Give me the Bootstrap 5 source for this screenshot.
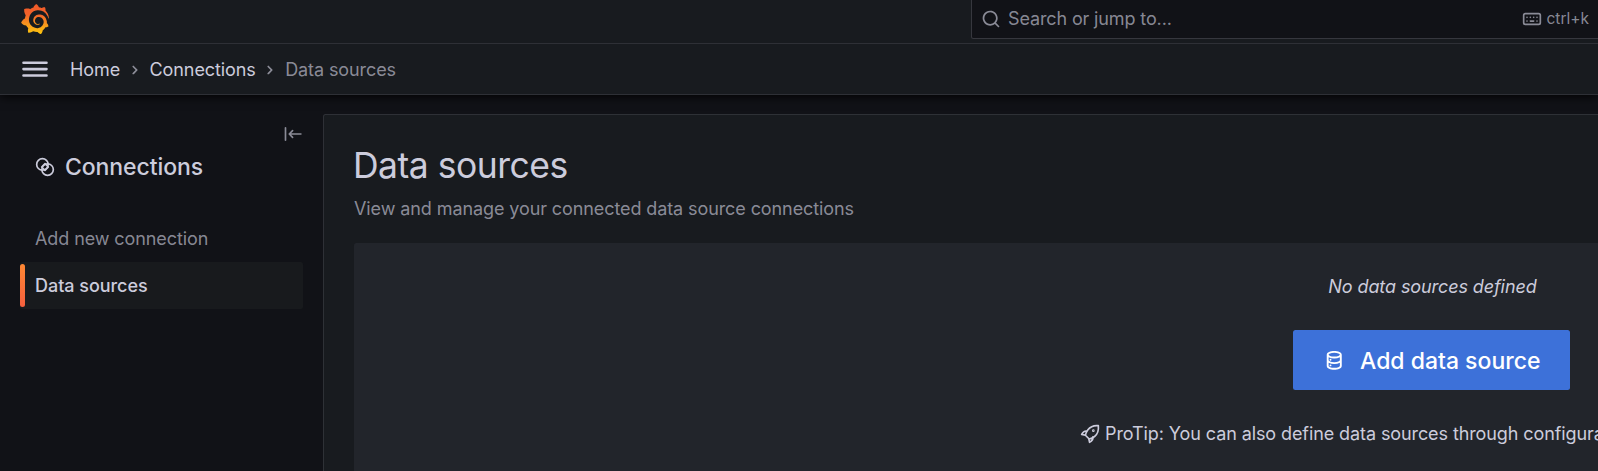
<!DOCTYPE html>
<html lang="en" data-bs-theme="dark">
<head>
<meta charset="utf-8">
<title>Data sources - Connections - Grafana</title>
<link href="https://cdn.jsdelivr.net/npm/bootstrap@5.3.0/dist/css/bootstrap.min.css" rel="stylesheet">
<style>
:root { --tx: #ccccdc; --tx2: rgba(204,204,220,.65); --line: rgba(204,204,220,.12); --canvas: #111217; --primary: #181b1f; --secondary: #22252b; }
html, body { height: 100%; }
body { background: var(--canvas); color: var(--tx); font-family: Inter, sans-serif; font-size: 18px; line-height: 27.5px; letter-spacing: -.095px; overflow: hidden; }
svg { flex: none; fill: currentColor; }
.ln { fill: none; stroke: currentColor; stroke-width: 2; stroke-linecap: round; stroke-linejoin: round; }
.chrome { background: var(--primary); border-bottom: 1px solid var(--line); box-shadow: 0 1px 10px #000; position: relative; }
.top-row { height: 44px; border-bottom: 1px solid var(--line); padding-left: 20px; }
.logo { margin-top: 4px; }
.crumb-row { height: 50px; padding-left: 20px; }
.crumbs { padding-top: 2px; }
.crumbs svg { margin: 0 5px 0 4.5px; }
.search-box { width: 627px; height: 39px; background: var(--canvas); border: solid rgba(204,204,220,.2); border-width: 0 0 1px 1px; border-radius: 0 0 0 2.5px; color: var(--tx2); padding: 0 9px; }
.search-text { margin-left: 7px; letter-spacing: -.13px; }
.kbd-hint { font-size: 15.5px; letter-spacing: 0; }
.crumbs a { color: var(--tx); }
.sub { color: var(--tx2); }
.side { width: 323px; padding: 19px 20px 0; }
.side-head { padding-left: 15px; gap: 10px; margin-top: -1px; }
.side-nav { margin-top: 33px; }
.side-title { font-size: 23px; line-height: 27.5px; font-weight: 500; margin: 0; padding-top: 1px; letter-spacing: -.08px; color: var(--tx); }
.side-link { height: 47px; padding: 1px 0 0 15px; border-radius: 2.5px; color: var(--tx2); }
.side-link.active { background: #181a1d; color: var(--tx); font-weight: 500; letter-spacing: -.04px; position: relative; }
.side-link.active::before { content: ""; position: absolute; left: 0; top: 2px; bottom: 2px; width: 5px; border-radius: 2.5px; background: linear-gradient(#ff8833, #f55f3e); }
.pane { margin-top: 19px; background: var(--primary); border: solid var(--line); border-width: 1px 0 0 1px; border-radius: 2.5px 0 0 0; padding: 30px 0 0 30px; overflow: hidden; }
.pane h1 { font-size: 35.5px; line-height: 42px; font-weight: 400; margin: 0 0 8px -1px; letter-spacing: -.5px; color: var(--tx); }
.empty { width: 2155px; height: 400px; margin-top: 20px; background: var(--secondary); border-radius: 2.5px; padding-top: 30px; }
.empty em { padding-left: 2px; }
.btn-add { width: 277px; height: 60px; background: #3d71d9; color: #fff; border: 0; border-radius: 2.5px; font-size: 23px; font-weight: 500; letter-spacing: 0; margin-top: 30px; gap: 15px; }
.btn-add span { padding-top: 3px; }
.tip { margin-top: 30px; width: 703px; white-space: nowrap; gap: 5px; }
</style>
</head>
<body class="d-flex flex-column">
<header class="chrome flex-shrink-0">
  <div class="top-row d-flex align-items-start justify-content-between">
    <svg class="logo" width="30" height="30" viewBox="0 0 24 24" aria-label="Grafana">
      <defs><linearGradient id="gl" x1="0" y1="1" x2="0" y2="0"><stop offset="0" stop-color="#fcc60e"/><stop offset=".3" stop-color="#f99b1c"/><stop offset=".65" stop-color="#f2622a"/><stop offset="1" stop-color="#f05a28"/></linearGradient></defs>
      <path fill="url(#gl)" d="M23.02 10.59a8.578 8.578 0 0 0-.862-3.034 8.911 8.911 0 0 0-1.789-2.445c.337-1.342-.413-2.505-.413-2.505-1.292-.08-2.113.4-2.416.62-.052-.02-.102-.044-.154-.064-.22-.089-.446-.172-.677-.247-.231-.073-.47-.14-.711-.197a9.867 9.867 0 0 0-.875-.161C14.557.753 12.94 0 12.94 0c-1.804 1.145-2.147 2.744-2.147 2.744l-.018.093c-.098.029-.2.057-.298.088-.138.042-.275.094-.413.143-.138.055-.275.107-.41.166a8.869 8.869 0 0 0-1.557.87l-.063-.029c-2.497-.955-4.716.195-4.716.195-.203 2.658.996 4.33 1.235 4.636a11.608 11.608 0 0 0-.607 2.635C1.636 12.677.953 15.014.953 15.014c1.926 2.214 4.171 2.351 4.171 2.351.003-.002.006-.002.006-.005.285.509.615.994.986 1.446.156.19.32.371.488.548-.704 2.009.099 3.68.099 3.68 2.144.08 3.553-.937 3.849-1.173a9.784 9.784 0 0 0 3.164.501h.08l.055-.003.107-.002.103-.005.003.002c1.01 1.44 2.788 1.646 2.788 1.646 1.264-1.332 1.337-2.653 1.337-2.94v-.058c0-.02-.003-.039-.003-.06.265-.187.52-.387.758-.6a7.875 7.875 0 0 0 1.415-1.7c1.43.083 2.437-.885 2.437-.885-.236-1.49-1.085-2.216-1.264-2.354l-.018-.013-.016-.013a.217.217 0 0 1-.031-.02c.008-.092.016-.18.02-.27.011-.162.016-.323.016-.48v-.253l-.005-.098-.008-.135a1.891 1.891 0 0 0-.01-.13c-.003-.042-.008-.083-.013-.125l-.016-.124-.018-.122a6.215 6.215 0 0 0-2.032-3.73 6.015 6.015 0 0 0-3.222-1.46 6.292 6.292 0 0 0-.85-.048l-.107.002h-.063l-.044.003-.104.008a4.777 4.777 0 0 0-3.335 1.695c-.332.4-.592.84-.768 1.297a4.594 4.594 0 0 0-.312 1.817l.003.091c.005.055.007.11.013.164a3.615 3.615 0 0 0 .698 1.82 3.53 3.53 0 0 0 1.827 1.282c.33.098.66.14.971.137.039 0 .078 0 .114-.002l.063-.003c.02 0 .041-.003.062-.003.034-.002.065-.007.099-.01.007 0 .018-.003.028-.003l.031-.005.06-.008a1.18 1.18 0 0 0 .112-.02c.036-.008.072-.013.109-.024a2.634 2.634 0 0 0 .914-.415c.028-.02.056-.041.085-.065a.248.248 0 0 0 .039-.35.244.244 0 0 0-.309-.06l-.078.042c-.09.044-.184.083-.283.116a2.476 2.476 0 0 1-.475.096c-.028.003-.054.006-.083.006l-.083.002c-.026 0-.054 0-.08-.002l-.102-.006h-.012l-.024.006c-.016-.003-.031-.003-.044-.006-.031-.002-.06-.007-.091-.01a2.59 2.59 0 0 1-.724-.213 2.557 2.557 0 0 1-.667-.438 2.52 2.52 0 0 1-.805-1.475 2.306 2.306 0 0 1-.029-.444l.006-.122v-.023l.002-.031c.003-.021.003-.04.005-.06a3.163 3.163 0 0 1 1.352-2.29 3.12 3.12 0 0 1 .937-.43 2.946 2.946 0 0 1 .776-.101h.06l.07.002.045.003h.026l.07.005a4.041 4.041 0 0 1 1.635.49 3.94 3.94 0 0 1 1.602 1.662 3.77 3.77 0 0 1 .397 1.414l.005.076.003.075c.002.026.002.05.002.075 0 .024.003.052 0 .07v.065l-.002.073-.008.174a6.195 6.195 0 0 1-.08.639 5.1 5.1 0 0 1-.267.927 5.31 5.31 0 0 1-.624 1.13 5.052 5.052 0 0 1-3.237 2.014 4.82 4.82 0 0 1-.649.066l-.039.003h-.287a6.607 6.607 0 0 1-1.716-.265 6.776 6.776 0 0 1-3.4-2.274 6.75 6.75 0 0 1-.746-1.15 6.616 6.616 0 0 1-.714-2.596l-.005-.083-.002-.02v-.056l-.003-.073v-.096l-.003-.104v-.07l.003-.163c.008-.22.026-.45.054-.678a8.707 8.707 0 0 1 .28-1.355c.128-.444.286-.872.473-1.277a7.04 7.04 0 0 1 1.456-2.1 5.925 5.925 0 0 1 .953-.763c.169-.111.343-.213.524-.306.089-.05.182-.091.273-.135.047-.02.093-.042.138-.062a7.177 7.177 0 0 1 .714-.267l.145-.045c.049-.015.098-.026.148-.041.098-.029.197-.052.296-.076.049-.013.1-.02.15-.033l.15-.032.151-.028.076-.013.075-.01.153-.024c.057-.01.114-.013.171-.023l.169-.021c.036-.003.073-.008.106-.01l.073-.008.036-.003.042-.002c.057-.003.114-.008.171-.01l.086-.006h.023l.037-.003.145-.007a7.999 7.999 0 0 1 1.708.125 7.917 7.917 0 0 1 2.048.68 8.253 8.253 0 0 1 1.672 1.09l.09.077.089.078c.06.052.114.107.171.159.057.052.112.106.166.16.052.055.107.107.159.164a8.671 8.671 0 0 1 1.41 1.978c.012.026.028.052.04.078l.04.078.075.156c.023.051.05.1.07.153l.065.15a8.848 8.848 0 0 1 .45 1.34.19.19 0 0 0 .201.142.186.186 0 0 0 .172-.184c.01-.246.002-.532-.024-.856z"/>
    </svg>
    <div class="search-box d-flex align-items-center">
      <svg width="20" height="20" viewBox="0 0 24 24"><path d="M21.71,20.29,18,16.61A9,9,0,1,0,16.61,18l3.68,3.68a1,1,0,0,0,1.42,0A1,1,0,0,0,21.71,20.29ZM11,18a7,7,0,1,1,7-7A7,7,0,0,1,11,18Z"/></svg>
      <span class="search-text me-auto">Search or jump to...</span>
      <svg class="me-1" width="20" height="20" viewBox="0 0 24 24"><rect class="ln" x="2" y="5.500" width="20" height="13" rx="2"/><path class="ln" d="M6 10h.01M10 10h.01M14 10h.01M18 10h.01M6 14.500h.01M10 14.500h4M18 14.500h.01"/></svg>
      <span class="kbd-hint">ctrl+k</span>
    </div>
  </div>
  <nav class="crumb-row d-flex align-items-center" aria-label="breadcrumb">
    <svg width="30" height="30" viewBox="0 0 30 30"><path d="M3.500 8.750h23M3.500 15.100h23M3.500 21.450h23" fill="none" stroke="currentColor" stroke-width="2.600" stroke-linecap="round"/></svg>
    <div class="crumbs d-flex align-items-center ms-3 ps-1">
      <a class="text-decoration-none" href="#">Home</a>
      <svg class="sub" width="20" height="20" viewBox="0 0 24 24"><path d="M14.83,11.29,10.59,7.05a1,1,0,0,0-1.42,0,1,1,0,0,0,0,1.41L12.71,12,9.17,15.54a1,1,0,0,0,0,1.41,1,1,0,0,0,.71.29,1,1,0,0,0,.71-.29l4.24-4.24A1,1,0,0,0,14.83,11.29Z"/></svg>
      <a class="text-decoration-none" href="#">Connections</a>
      <svg class="sub" width="20" height="20" viewBox="0 0 24 24"><path d="M14.83,11.29,10.59,7.05a1,1,0,0,0-1.42,0,1,1,0,0,0,0,1.41L12.71,12,9.17,15.54a1,1,0,0,0,0,1.41,1,1,0,0,0,.71.29,1,1,0,0,0,.71-.29l4.24-4.24A1,1,0,0,0,14.83,11.29Z"/></svg>
      <span class="sub">Data sources</span>
    </div>
  </nav>
</header>
<div class="d-flex flex-grow-1 overflow-hidden">
  <aside class="side flex-shrink-0">
    <div class="d-flex justify-content-end sub">
      <svg width="20" height="40" viewBox="0 0 24 48"><path class="ln" d="M3 16.500v15M21.500 24H8M11.500 20l-4 4 4 4"/></svg>
    </div>
    <div class="d-flex align-items-center side-head">
      <svg width="20" height="20" viewBox="0 0 24 24"><g class="ln"><circle cx="8.900" cy="8.900" r="6.900"/><circle cx="15.100" cy="15.100" r="6.900"/><path d="M8 12l4-4 4 4-4 4z"/></g></svg>
      <h2 class="side-title">Connections</h2>
    </div>
    <nav class="side-nav">
      <a class="side-link d-flex align-items-center text-decoration-none" href="#">Add new connection</a>
      <a class="side-link active d-flex align-items-center text-decoration-none" href="#">Data sources</a>
    </nav>
  </aside>
  <main class="pane flex-grow-1">
    <h1>Data sources</h1>
    <div class="sub">View and manage your connected data source connections</div>
    <section class="empty d-flex flex-column align-items-center">
      <em>No data sources defined</em>
      <button class="btn-add d-flex align-items-center justify-content-center"><svg width="22.500" height="22.500" viewBox="0 0 24 24"><path d="M8,16.5a1,1,0,1,0,1,1A1,1,0,0,0,8,16.5ZM12,2C8,2,4,3.37,4,6V18c0,2.63,4,4,8,4s8-1.37,8-4V6C20,3.37,16,2,12,2Zm6,16c0,.71-2.28,2-6,2s-6-1.29-6-2V14.73A13.16,13.16,0,0,0,12,16a13.16,13.16,0,0,0,6-1.27Zm0-6c0,.71-2.28,2-6,2s-6-1.29-6-2V8.73A13.16,13.16,0,0,0,12,10a13.16,13.16,0,0,0,6-1.27ZM12,8C8.28,8,6,6.71,6,6s2.28-2,6-2,6,1.29,6,2S15.72,8,12,8ZM8,10.5a1,1,0,1,0,1,1A1,1,0,0,0,8,10.5Z"/></svg><span>Add data source</span></button>
      <div class="tip d-flex align-items-center"><svg width="20" height="20" viewBox="0 0 24 24"><g class="ln"><path d="M22 2c-5-.5-9.500 1-12.500 5-1.500 2-2.500 4-3 6.500l4.500 4.500c2.500-.5 4.500-1.500 6.500-3C21.500 12 22.500 7 22 2zM8.500 8.500C5.500 8 3.500 9.500 2 12.500l4.500 1M15.500 15.500c.5 3-1 5-4 6.500l-1-4.500"/><circle cx="16" cy="8" r=".6"/></g></svg><span>ProTip: You can also define data sources through configuration files.</span></div>
    </section>
  </main>
</div>
<script src="https://cdn.jsdelivr.net/npm/bootstrap@5.3.0/dist/js/bootstrap.bundle.min.js"></script>
</body>
</html>
